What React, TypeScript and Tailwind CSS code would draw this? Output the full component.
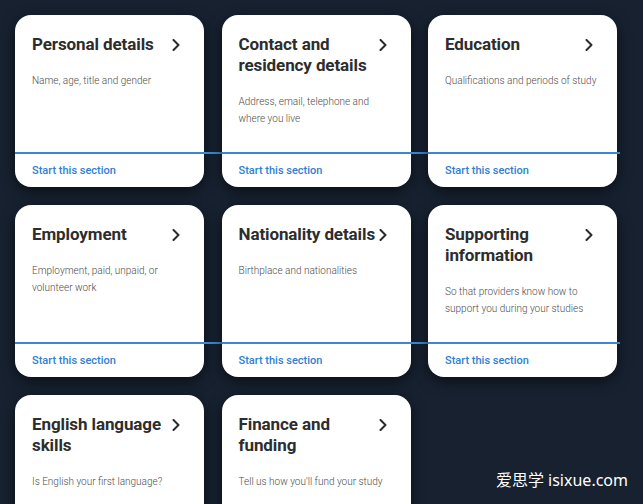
import React from "react";

type Section = {
  title: string;
  description: string;
};

const sections: Section[] = [
  { title: "Personal details", description: "Name, age, title and gender" },
  { title: "Contact and residency details", description: "Address, email, telephone and where you live" },
  { title: "Education", description: "Qualifications and periods of study" },
  { title: "Employment", description: "Employment, paid, unpaid, or volunteer work" },
  { title: "Nationality details", description: "Birthplace and nationalities" },
  { title: "Supporting information", description: "So that providers know how to support you during your studies" },
  { title: "English language skills", description: "Is English your first language?" },
  { title: "Finance and funding", description: "Tell us how you'll fund your study" },
];

function Chevron() {
  return (
    <svg width="8" height="12" viewBox="0 0 8 12" fill="none" className="mt-[5px] mr-[7px] shrink-0">
      <path d="M1.5 1 L6.5 6 L1.5 11" stroke="#2b2b2b" strokeWidth="2" strokeLinecap="round" strokeLinejoin="round" />
    </svg>
  );
}

function SectionCard({ section, column }: { section: Section; column: number }) {
  // the divider runs on past the card edge into the gap
  const lineRight = column === 2 ? "-right-[3px]" : "-right-[18px]";

  return (
    <div className="relative flex h-[172px] flex-col rounded-[16px] bg-white shadow-[0_4px_14px_rgba(0,0,0,0.55)]">
      <div className="flex flex-1 flex-col px-[17px] pt-[19px]">
        <div className="flex items-start justify-between">
          <h2 className="flex-1 text-[17px] font-bold leading-[21px] tracking-[-0.1px] text-[#2d2d2d]">{section.title}</h2>
          <Chevron />
        </div>
        <p className="mt-[17px] text-[10px] font-light leading-[17px] text-[#4d4d4d]">{section.description}</p>
      </div>
      <div className={`absolute left-0 top-[137px] h-[2px] bg-[#3b87d3] ${lineRight}`} />
      <div className="flex h-[35px] items-center px-[17px] pt-[3px]">
        <span className="text-[11px] font-medium text-[#2f80cf]">Start this section</span>
      </div>
    </div>
  );
}

export default function App() {
  return (
    <div
      className="relative h-[504px] overflow-hidden bg-[#172130]"
      style={{ fontFamily: "Roboto, 'Noto Sans', sans-serif" }}
    >
      <div className="grid grid-cols-[189px_189px_189px] gap-x-[17.5px] gap-y-[18px] pl-[15px] pt-[15px]">
        {sections.map((section, i) => (
          <SectionCard key={section.title} section={section} column={i % 3} />
        ))}
      </div>
      <div
        className="absolute bottom-[12px] right-[15px] text-[16px] text-white"
        style={{ fontFamily: "'Noto Sans', 'Noto Sans CJK SC', sans-serif" }}
      >
        爱思学 isixue.com
      </div>
    </div>
  );
}
